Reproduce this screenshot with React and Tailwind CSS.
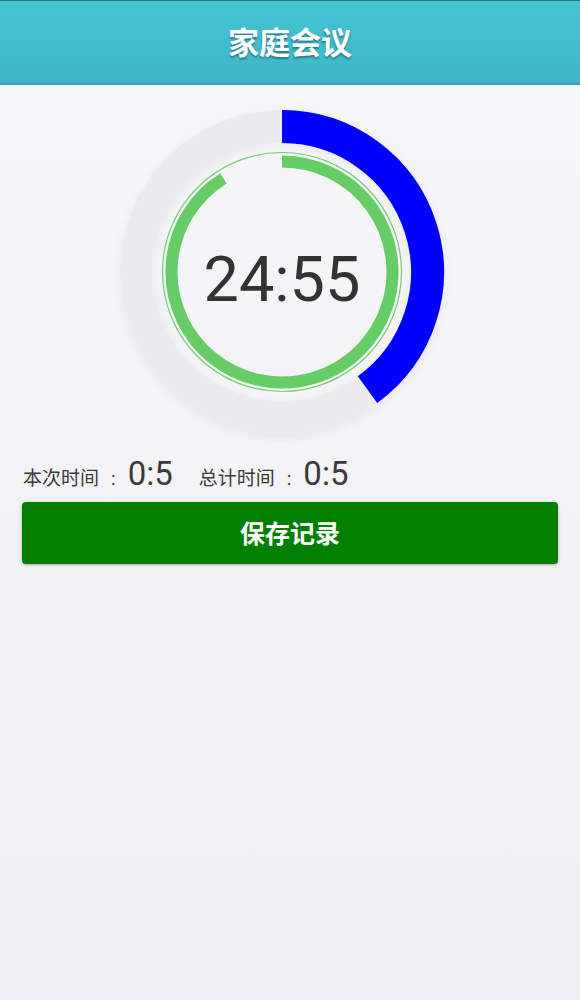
import React from "react";

const CX = 170;
const CY = 170;

// point on circle, angle in degrees clockwise from 12 o'clock
const pt = (r, deg) => {
  const a = (deg * Math.PI) / 180;
  return [CX + r * Math.sin(a), CY - r * Math.cos(a)];
};

const arc = (r, from, to) => {
  const [x1, y1] = pt(r, from);
  const [x2, y2] = pt(r, to);
  const large = to - from > 180 ? 1 : 0;
  return `M ${x1} ${y1} A ${r} ${r} 0 ${large} 1 ${x2} ${y2}`;
};

const Timer = ({ time, outer, inner }) => {
  return (
    <div className="relative w-[340px] h-[340px] ml-[112px] mt-[17px]">
      <svg width="340" height="340" viewBox="0 0 340 340">
        <defs>
          <filter id="soft" x="-20%" y="-20%" width="140%" height="140%">
            <feDropShadow dx="0" dy="3" stdDeviation="5" floodColor="#000" floodOpacity="0.05" />
          </filter>
        </defs>
        <circle cx={CX} cy={CY} r="145.5" fill="none" stroke="#ececee" strokeWidth="33" filter="url(#soft)" />
        <path d={arc(145.5, 0, outer)} fill="none" stroke="#0000ff" strokeWidth="33" />
        <circle cx={CX} cy={CY} r="119.5" fill="none" stroke="#74cf74" strokeWidth="1.2" />
        <path d={arc(110.5, 0, inner)} fill="none" stroke="#66cc66" strokeWidth="12" />
      </svg>
      <div className="absolute inset-0 flex items-center justify-center pt-[14px]">
        <span className="text-[63px] leading-none text-[#333333] font-['Roboto',sans-serif]">
          {time}
        </span>
      </div>
    </div>
  );
};

const App = () => {
  const stats = [
    { label: "本次时间", value: "0:5" },
    { label: "总计时间", value: "0:5" },
  ];

  return (
    <div className="w-[580px] h-[1000px] bg-gradient-to-b from-[#f7f7f9] to-[#efeef1] font-['Roboto','Noto_Sans_CJK_SC',sans-serif]">
      <div className="h-[85px] border-t border-[#2e7d86] border-b-2 border-b-[#33a4b3] bg-gradient-to-b from-[#46c4d4] to-[#3db6c8] flex items-center justify-center">
        <h1 className="text-[31px] font-bold text-white font-['Noto_Sans_CJK_SC',sans-serif] [text-shadow:0_2px_2px_rgba(0,0,0,0.35)] -mt-[2px]">
          家庭会议
        </h1>
      </div>

      <Timer time="24:55" outer={144} inner={328} />

      <div className="flex items-baseline pl-[23px] mt-[15px] text-[#3a3a3a]">
        {stats.map((s, i) => (
          <div key={i} className={`flex items-baseline ${i === 1 ? "ml-[26px]" : ""}`}>
            <span className="text-[19px] font-['Noto_Sans_CJK_SC',sans-serif]">{s.label}</span>
            <span className="text-[19px] ml-[12px] mr-[12px]">:</span>
            <span className="text-[33px] leading-none font-['Roboto',sans-serif]">{s.value}</span>
          </div>
        ))}
      </div>

      <div className="px-[22px] mt-[8px]">
        <button className="w-full h-[62px] rounded-[4px] bg-[#008000] text-white text-[25px] font-bold font-['Noto_Sans_CJK_SC',sans-serif] shadow-[0_1px_3px_rgba(0,0,0,0.3)]">
          保存记录
        </button>
      </div>
    </div>
  );
};

export default App;
